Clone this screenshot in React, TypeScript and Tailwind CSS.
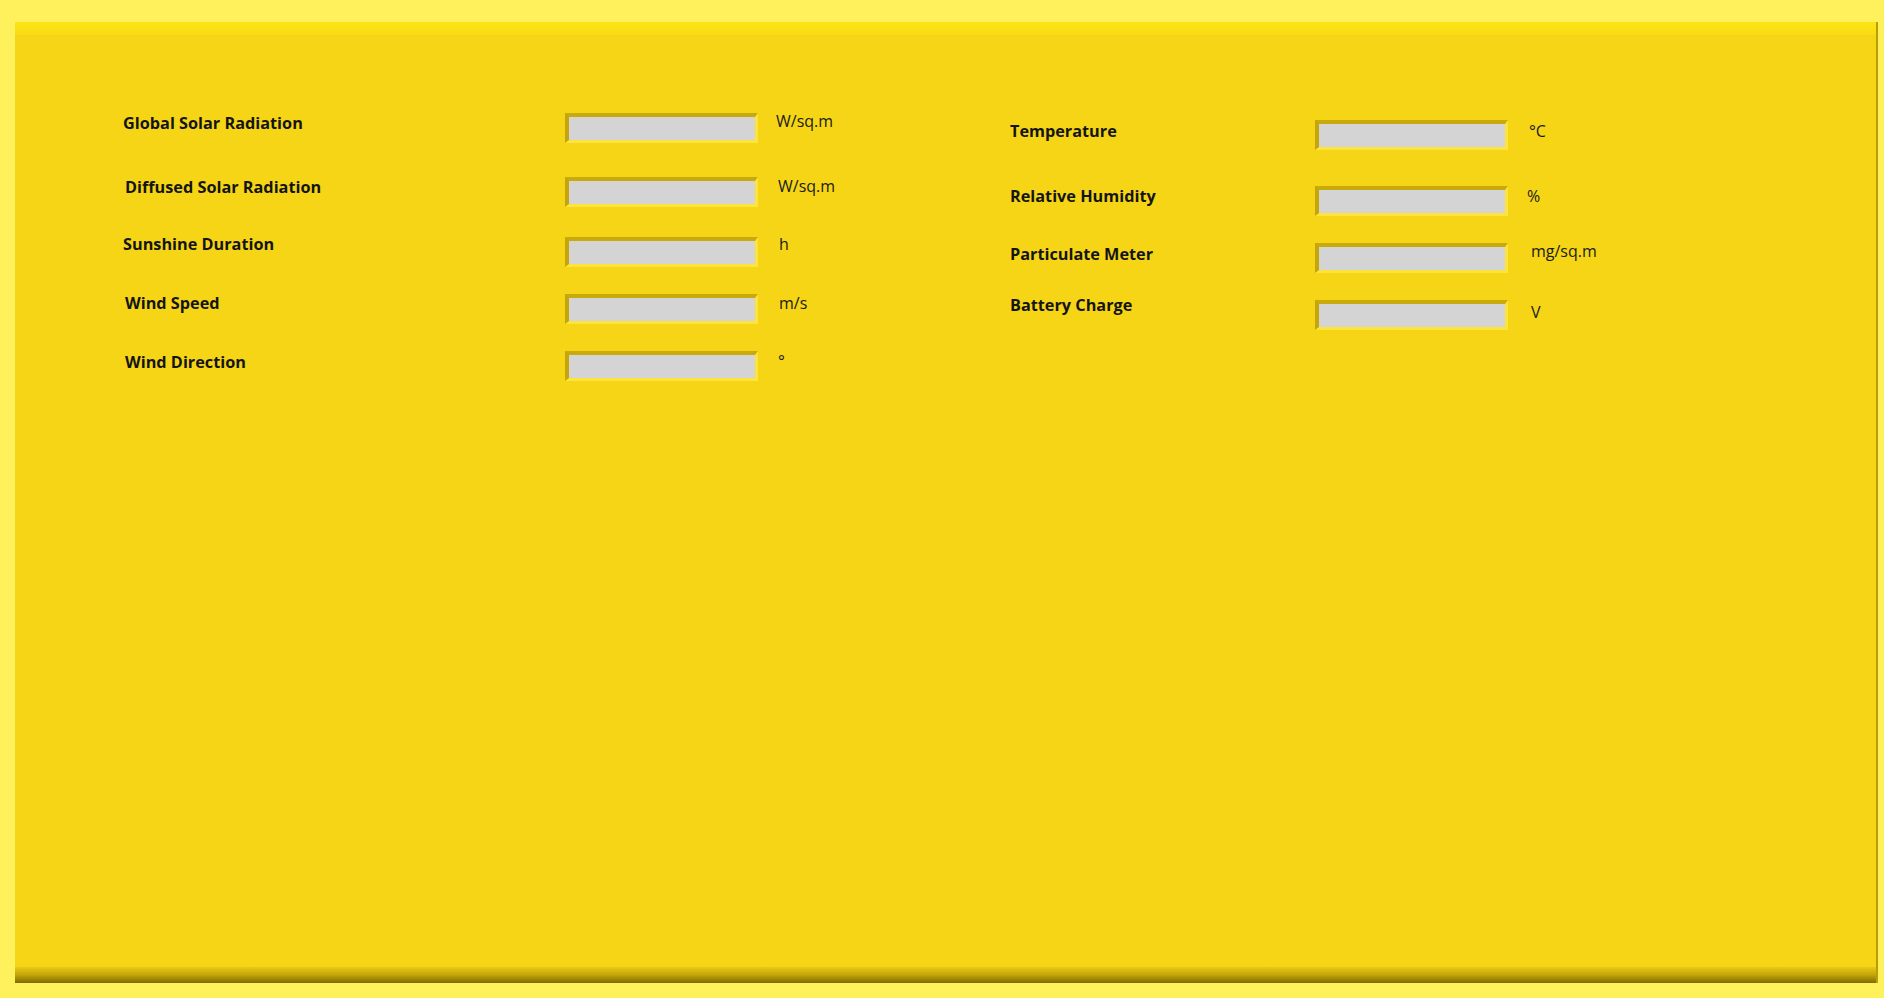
type Row = { label: string; unit: string; gap: string; labelMt: string; labelPl: string; unitMt: string; unitMl: string };

const leftRows: Row[] = [
  { label: 'Global Solar Radiation', unit: 'W/sq.m', gap: 'mt-0', labelMt: 'mt-[0px]', labelPl: 'pl-0', unitMt: 'mt-[-2px]', unitMl: 'ml-[18px]' },
  { label: 'Diffused Solar Radiation', unit: 'W/sq.m', gap: 'mt-[34px]', labelMt: 'mt-[-0.5px]', labelPl: 'pl-[2px]', unitMt: 'mt-[-1px]', unitMl: 'ml-[20px]' },
  { label: 'Sunshine Duration', unit: 'h', gap: 'mt-[30px]', labelMt: 'mt-[-3px]', labelPl: 'pl-0', unitMt: 'mt-[-3px]', unitMl: 'ml-[21px]' },
  { label: 'Wind Speed', unit: 'm/s', gap: 'mt-[27px]', labelMt: 'mt-[-1px]', labelPl: 'pl-[2px]', unitMt: 'mt-[-1px]', unitMl: 'ml-[21px]' },
  { label: 'Wind Direction', unit: '°', gap: 'mt-[27px]', labelMt: 'mt-[1px]', labelPl: 'pl-[2px]', unitMt: 'mt-[0px]', unitMl: 'ml-[20px]' },
];

const rightRows: Row[] = [
  { label: 'Temperature', unit: '°C', gap: 'mt-[7px]', labelMt: 'mt-[1px]', labelPl: 'pl-0', unitMt: 'mt-[1px]', unitMl: 'ml-[21px]' },
  { label: 'Relative Humidity', unit: '%', gap: 'mt-[36px]', labelMt: 'mt-[0px]', labelPl: 'pl-0', unitMt: 'mt-0', unitMl: 'ml-[19px]' },
  { label: 'Particulate Meter', unit: 'mg/sq.m', gap: 'mt-[27px]', labelMt: 'mt-[1px]', labelPl: 'pl-0', unitMt: 'mt-[-2px]', unitMl: 'ml-[23px]' },
  { label: 'Battery Charge', unit: 'V', gap: 'mt-[27px]', labelMt: 'mt-[-5px]', labelPl: 'pl-0', unitMt: 'mt-[2px]', unitMl: 'ml-[23px]' },
];

function Field() {
  // bevelled read-out box: dark top/left, light bottom/right
  return (
    <div className="h-[30px] w-[193px] shrink-0 border-t-[4px] border-l-[4px] border-b-[3px] border-r-[3px] border-t-[#c9aa0c] border-l-[#c4a50b] border-b-[#fce43c] border-r-[#fce43c] bg-[#d4d4d4]" />
  );
}

function Column({ rows, labelWidth, width }: { rows: Row[]; labelWidth: string; width: string }) {
  return (
    <div className={`flex flex-col ${width}`}>
      {rows.map((r) => (
        <div key={r.label} className={`flex items-start h-[30px] ${r.gap}`}>
          <div className={`${labelWidth} shrink-0 ${r.labelMt} ${r.labelPl} text-[16.25px] leading-[20px] font-bold text-[#141414]`}>
            {r.label}
          </div>
          <Field />
          <div className={`${r.unitMl} ${r.unitMt} text-[16px] leading-[20px] text-[#1a1a1a]`}>{r.unit}</div>
        </div>
      ))}
    </div>
  );
}

export default function App() {
  return (
    <div className="w-[1884px] h-[998px] bg-[#fef15c] pt-[22px] pl-[15px] pr-[6px] pb-[15px]" style={{ fontFamily: '"Open Sans", sans-serif' }}>
      <div className="h-full w-full flex flex-col border-r-2 border-r-[#b99e06]">
        <div className="h-[13px] bg-gradient-to-b from-[#fde414] to-[#f8db16]" />
        <div className="flex-1 bg-[#f5d516] pt-[78px] flex">
          <div className="pl-[108px] flex">
            <Column rows={leftRows} labelWidth="w-[442px]" width="w-[887px]" />
            <Column rows={rightRows} labelWidth="w-[305px]" width="w-[560px]" />
          </div>
        </div>
        <div className="h-[16px] bg-gradient-to-b from-[#e9c914] via-[#c3a40c] to-[#7d6a03]" />
      </div>
    </div>
  );
}
